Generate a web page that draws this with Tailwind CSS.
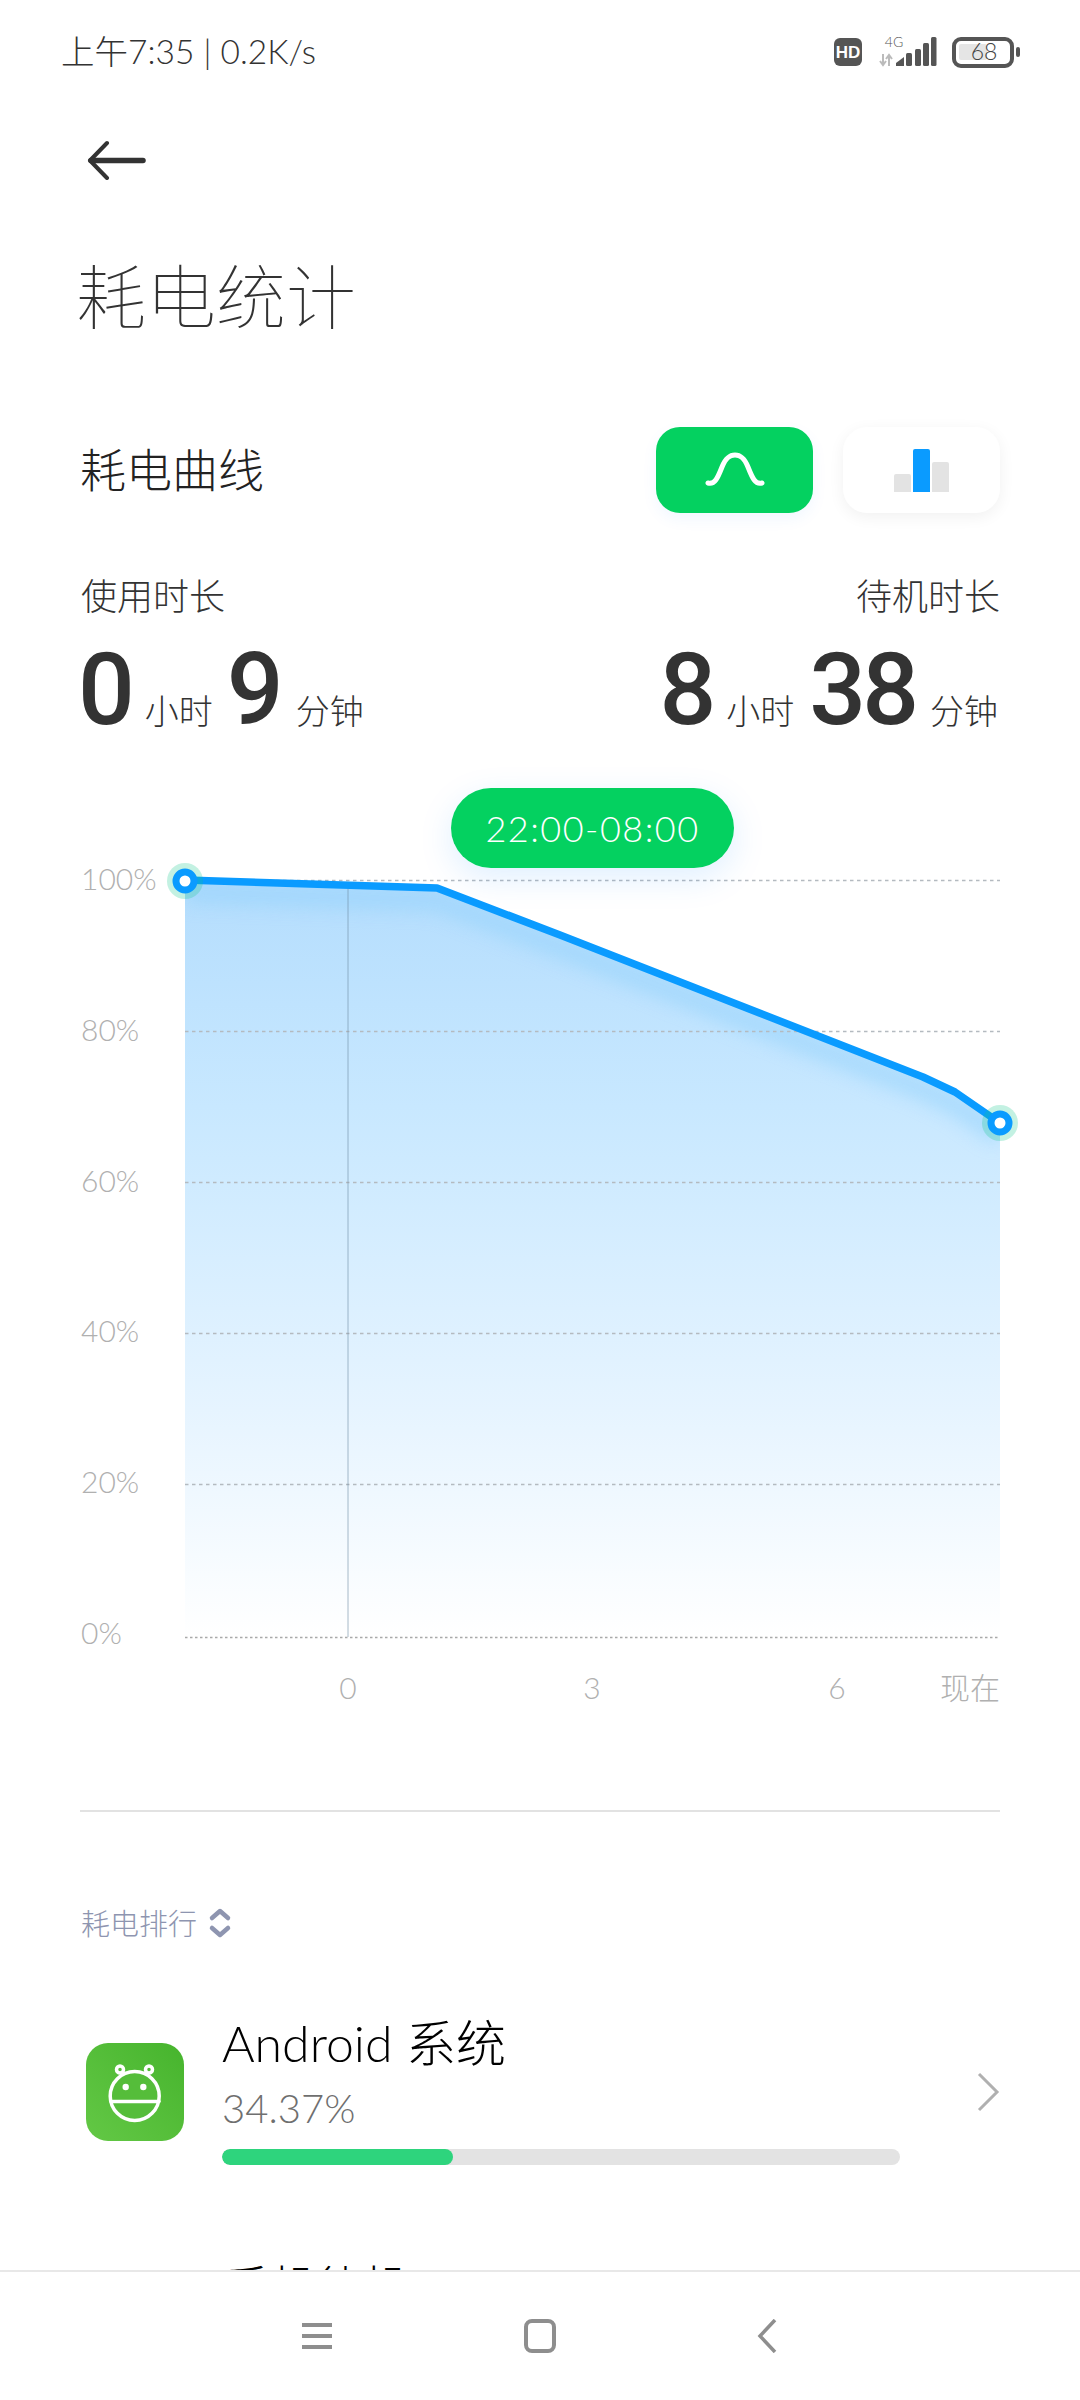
<!DOCTYPE html>
<html lang="zh-CN">
  <head>
    <meta charset="UTF-8" />
    <title>耗电统计</title>
    <script src="https://cdn.jsdelivr.net/npm/@tailwindcss/browser@4"></script>
  </head>
  <body class="relative w-[1080px] h-[2400px] overflow-hidden bg-white text-[#333] font-light font-['Lato','Noto_Sans_CJK_SC',sans-serif]">

    <!-- Status bar -->
    <div class="flex items-center justify-between h-[104px] pl-[61px] pr-[60px]">
      <span class="text-[33.5px] leading-none text-[#333]">上午7:35 | 0.2K/s</span>
      <svg width="186" height="34" viewBox="834 35 186 34">
        <rect x="834" y="38" width="28" height="28" rx="6" fill="#555"/>
        <text x="848" y="58" font-size="17" font-weight="800" fill="#fff" text-anchor="middle" font-family="Liberation Sans">HD</text>
        <text x="894" y="47" font-size="14" fill="#555" text-anchor="middle" font-family="Lato">4G</text>
        <path d="M883 54v11M880 61l3 4 3-4M889 66V55M886 59l3-4 3 4" fill="none" stroke="#bbb" stroke-width="2"/>
        <path d="M896 66v-3l8-6v9z" fill="#555"/>
        <rect x="906" y="53" width="6" height="13" rx="1.5" fill="#555"/>
        <rect x="915" y="49" width="6" height="17" rx="1.5" fill="#555"/>
        <rect x="923" y="43" width="6" height="23" rx="1.5" fill="#555"/>
        <rect x="931" y="37" width="5.5" height="29" rx="1.5" fill="#555"/>
        <rect x="954" y="39" width="58" height="27" rx="7" fill="none" stroke="#555" stroke-width="4"/>
        <rect x="959" y="44" width="28" height="16" rx="2" fill="#e5e5e5"/>
        <text x="984" y="60" font-size="23" fill="#444" text-anchor="middle" font-family="Lato" font-weight="300">68</text>
        <rect x="1016" y="47" width="4" height="10" rx="2" fill="#555"/>
      </svg>
    </div>

    <!-- Back -->
    <div class="h-[112px] flex items-center pl-[87px]">
      <svg width="60" height="40" viewBox="87 140 60 40" fill="none" stroke="#333" stroke-linecap="round" stroke-linejoin="round">
        <path d="M107 143L90 160.500L107 178" stroke-width="4"/>
        <path d="M91 160.500H143" stroke-width="5.500"/>
      </svg>
    </div>

    <h1 class="mt-[46px] pl-[76px] h-[70px] text-[70px] leading-[70px] font-thin text-[#333]">耗电统计</h1>

    <!-- Curve header -->
    <div class="mt-[95px] flex items-center justify-between pl-[80px] pr-[80px] h-[86px]">
      <span class="text-[46px] leading-none font-light text-[#222]">耗电曲线</span>
      <div class="flex gap-[30px]">
        <div class="w-[157px] h-[86px] rounded-[24px] bg-[#04d160] shadow-[0_6px_16px_rgba(0,120,255,0.06)] flex items-center justify-center">
          <svg width="60" height="36" viewBox="0 0 60 36" fill="none"><path d="M3 31C10 33 13 25 17 15C21 5 25 3 30 3C35 3 39 5 43 15C47 25 50 33 57 31" stroke="#fff" stroke-width="5" stroke-linecap="round"/></svg>
        </div>
        <div class="w-[157px] h-[86px] rounded-[24px] bg-white shadow-[0_4px_16px_rgba(0,0,0,0.06)] flex items-end justify-center pb-[21px] gap-[2px]">
          <div class="w-[17px] h-[18px] rounded-t-[2px] bg-[#e3e3e3]"></div>
          <div class="w-[17px] h-[43px] rounded-t-[2px] bg-[#0a9bff]"></div>
          <div class="w-[17px] h-[30px] rounded-t-[2px] bg-[#e3e3e3]"></div>
        </div>
      </div>
    </div>

    <!-- Durations -->
    <div class="mt-[63px] flex justify-between pl-[81px] pr-[80px]">
      <div>
        <div class="text-[36px] leading-[40px]">使用时长</div>
        <div class="mt-[24px] flex items-baseline h-[95px] -ml-[3px]">
          <span class="text-[100px] leading-[100px] font-medium font-['Roboto']">0</span>
          <span class="ml-[10px] text-[34px]">小时</span>
          <span class="ml-[14px] text-[100px] leading-[100px] font-medium font-['Roboto']">9</span>
          <span class="ml-[12px] text-[34px]">分钟</span>
        </div>
      </div>
      <div class="flex flex-col items-end">
        <div class="text-[36px] leading-[40px]">待机时长</div>
        <div class="mt-[24px] flex items-baseline h-[95px] pr-[2px]">
          <span class="text-[100px] leading-[100px] font-medium font-['Roboto']">8</span>
          <span class="ml-[10px] text-[34px]">小时</span>
          <span class="ml-[15px] text-[100px] leading-[100px] font-medium font-['Roboto'] tracking-[-4px]">38</span>
          <span class="ml-[15px] text-[34px]">分钟</span>
        </div>
      </div>
    </div>

    <!-- Chart: svg uses page x and y offset by the 780 top of this block -->
    <div class="relative mt-[45px] h-[950px] text-[#b0b0b0]">
      <svg class="absolute inset-0" width="1080" height="950" viewBox="0 780 1080 950" fill="none">
        <defs>
          <linearGradient id="area" x1="0" y1="880" x2="0" y2="1637" gradientUnits="userSpaceOnUse">
            <stop offset="0" stop-color="#b4ddfd"/>
            <stop offset="0.3" stop-color="#c8e8ff"/>
            <stop offset="0.7" stop-color="#e6f4ff"/>
            <stop offset="1" stop-color="#ffffff"/>
          </linearGradient>
          <clipPath id="areaClip"><path d="M185 880L437 888L560 935L923 1077L955 1092L1000 1123V1637H185Z"/></clipPath>
          <filter id="soft" x="-10%" y="-30%" width="120%" height="160%"><feGaussianBlur stdDeviation="9"/></filter>
        </defs>
        <path d="M185 880L437 888L560 935L923 1077L955 1092L1000 1123V1637H185Z" fill="url(#area)"/>
        <g clip-path="url(#areaClip)">
          <path d="M185 892L437 900L560 947L923 1089L955 1104L1000 1135" stroke="#93d2fc" stroke-width="22" opacity="0.55" filter="url(#soft)"/>
        </g>
        <g stroke="#b4bac0" stroke-width="1.500" stroke-dasharray="3.500 3.500">
          <path d="M185 880.500H1000"/>
          <path d="M185 1031.500H1000"/>
          <path d="M185 1182.500H1000"/>
          <path d="M185 1333.500H1000"/>
          <path d="M185 1484.500H1000"/>
        </g>
        <path d="M185 1637.500H1000" stroke="#a9a9a9" stroke-width="1.500" stroke-dasharray="2.500 2.500"/>
        <path d="M348 888V1637" stroke="#6f8da3" stroke-width="1" opacity="0.6"/>
        <path d="M185 880L437 888L560 935L923 1077L955 1092L1000 1123" stroke="#0a9bff" stroke-width="7.500" stroke-linejoin="round"/>
        <circle cx="185" cy="881" r="18" fill="#10c98a" opacity="0.25"/>
        <circle cx="185" cy="881" r="9" fill="#fff" stroke="#0a9bff" stroke-width="7"/>
        <circle cx="1000" cy="1123" r="18" fill="#10c98a" opacity="0.25"/>
        <circle cx="1000" cy="1123" r="9" fill="#fff" stroke="#0a9bff" stroke-width="7"/>
      </svg>

      <div class="absolute left-[451px] top-[8px] w-[283px] h-[80px] rounded-full bg-[#04d160] text-white text-[36px] tracking-[1.5px] flex items-center justify-center shadow-[0_10px_34px_rgba(0,130,255,0.13)]">22:00-08:00</div>

      <!-- y axis labels -->
      <div class="absolute left-[81px] top-[78px] h-[794px] flex flex-col justify-between text-[30px] leading-[40px]">
        <span>100%</span><span>80%</span><span>60%</span><span>40%</span><span>20%</span><span>0%</span>
      </div>

      <!-- x axis labels -->
      <div class="absolute left-0 right-[80px] top-[887px] flex text-[30px] leading-[40px]">
        <span class="ml-[338px] w-[20px] text-center">0</span>
        <span class="ml-[224px] w-[20px] text-center">3</span>
        <span class="ml-[225px] w-[20px] text-center">6</span>
        <span class="ml-auto">现在</span>
      </div>
    </div>

    <div class="mt-[80px] mx-[80px] h-[2px] bg-[#e2e2e2]"></div>

    <!-- Ranking -->
    <div class="mt-[96px] pl-[81px] flex items-center gap-[11px] h-[30px]">
      <span class="text-[29px] leading-none text-[#8e95b0]">耗电排行</span>
      <svg width="24" height="30" viewBox="0 0 24 30" fill="none" stroke="#8e95b0" stroke-width="4.500" stroke-linecap="round" stroke-linejoin="round"><path d="M4 10L12 3L20 10"/><path d="M4 20L12 27L20 20"/></svg>
    </div>

    <div class="mt-[81px] pl-[86px] pr-[80px] flex items-center">
      <div class="w-[98px] h-[98px] rounded-[22px] bg-gradient-to-tr from-[#63c845] to-[#46b42d] shrink-0">
        <svg width="98" height="98" viewBox="0 0 98 98" fill="none" stroke="#fff" stroke-width="3.500" stroke-linecap="round">
          <circle cx="34" cy="26.500" r="3.500"/>
          <circle cx="63" cy="26.500" r="3.500"/>
          <circle cx="48.700" cy="53" r="24.500" fill="#55bd3a"/>
          <path d="M25 58.500H73"/>
          <circle cx="39.700" cy="44" r="3.200" fill="#fff" stroke="none"/>
          <circle cx="57.300" cy="44" r="3.200" fill="#fff" stroke="none"/>
        </svg>
      </div>
      <div class="ml-[38px] w-[678px] -mt-[3px]">
        <div class="text-[50px] leading-[54px] text-black">Android 系统</div>
        <div class="mt-[13px] text-[40px] leading-[50px] text-[#6f6f6f]">34.37%</div>
        <div class="mt-[16px] h-[16px] rounded-full bg-[#e3e3e3] overflow-hidden">
          <div class="h-full rounded-full bg-[#2ed47d]" style="width: 34.1%"></div>
        </div>
      </div>
      <svg class="ml-auto" width="24" height="40" viewBox="0 0 24 40" fill="none" stroke="#b0b0b0" stroke-width="3"><path d="M3 2L21 20L3 38"/></svg>
    </div>

    <div class="mt-[94px] pl-[224px] text-[46px] leading-[56px] text-black">手机待机</div>

    <!-- Bottom nav, sits over the list -->
    <div class="absolute left-0 right-0 bottom-0 h-[130px] bg-white border-t-2 border-[#e8e8e8] flex items-center">
      <svg class="absolute left-[302px] top-[50px]" width="30" height="28" viewBox="0 0 30 28" fill="#8e8e8e"><rect y="1" width="30" height="4"/><rect y="12" width="30" height="4"/><rect y="23" width="30" height="4"/></svg>
      <svg class="absolute left-[523px] top-[47px]" width="34" height="34" viewBox="0 0 34 34" fill="none" stroke="#8e8e8e" stroke-width="4"><rect x="3" y="2" width="28" height="30" rx="6"/></svg>
      <svg class="absolute left-[756px] top-[47px]" width="22" height="34" viewBox="0 0 22 34" fill="none" stroke="#8e8e8e" stroke-width="3.500"><path d="M19 1L4 17L19 33"/></svg>
    </div>
  </body>
</html>
